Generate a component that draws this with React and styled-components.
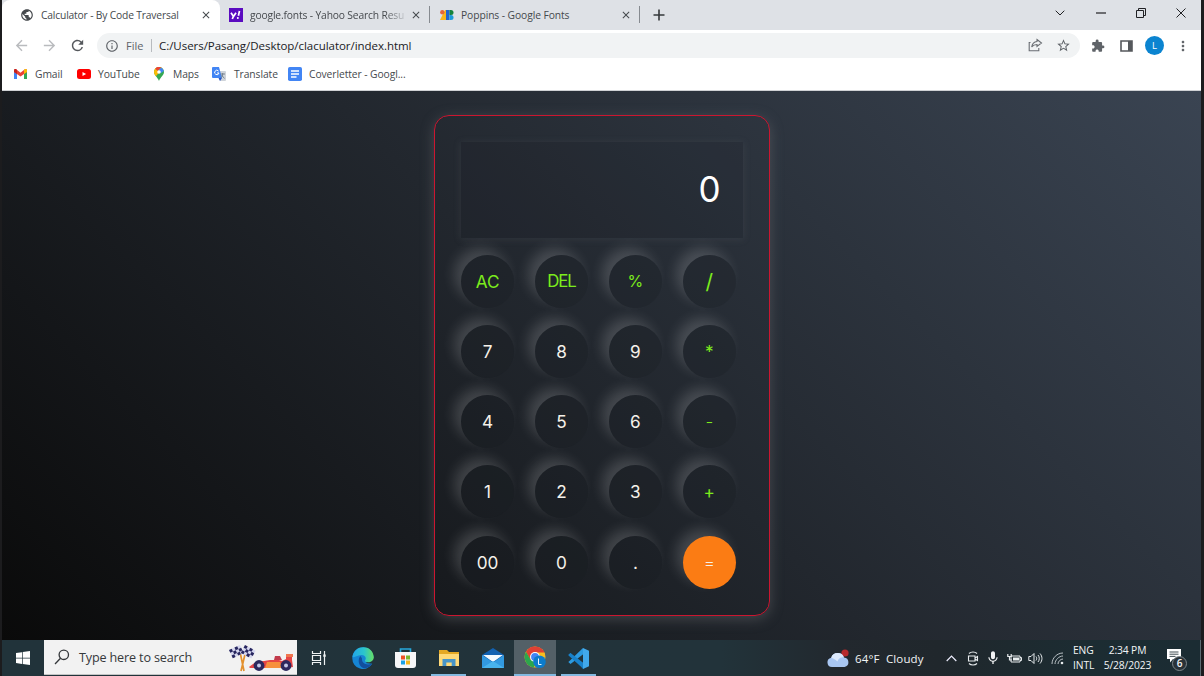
import React from "react";
import styled, { createGlobalStyle } from "styled-components";
import {
  MdArrowBack, MdArrowForward, MdRefresh, MdPublic, MdInfoOutline,
  MdStarBorder, MdExtension, MdMoreVert, MdClose, MdMic,
} from "react-icons/md";

const Global = createGlobalStyle`
  * { box-sizing: border-box; }
  body { margin: 0; background: #1b1b1b; }
`;

const ui = `"Open Sans", "Noto Sans", sans-serif`;

const Screen = styled.div`
  width: 1204px;
  height: 676px;
  padding: 0 3px 0 2px;
  display: flex;
  flex-direction: column;
  background: #1c1c1e;
  font-family: ${ui};
  overflow: hidden;
`;

const TabStrip = styled.div`
  height: 30px;
  flex: none;
  display: flex;
  background: #dee1e6;
  color: #45494d;
`;

const Tab = styled.div`
  width: ${(p) => p.$w}px;
  height: 30px;
  flex: none;
  display: flex;
  align-items: center;
  padding-left: ${(p) => p.$pl}px;
  background: ${(p) => (p.$active ? "#fff" : "transparent")};
  border-radius: 8px 8px 0 0;
  svg { flex: none; }
`;

const TabTitle = styled.span`
  width: ${(p) => p.$w}px;
  margin-left: 7px;
  flex: none;
  font-size: 10.3px;
  letter-spacing: ${(p) => p.$ls || 0}px;
  white-space: nowrap;
  ${(p) => p.$fade && "mask-image: linear-gradient(90deg, #000 84%, rgba(0, 0, 0, 0.2) 96%);"}
`;

const Divider = styled.span`
  width: 1px;
  height: ${(p) => p.$h}px;
  margin: ${(p) => p.$m || "0"};
  flex: none;
  background: ${(p) => p.$c || "#868a90"};
`;

const WindowButtons = styled.div`
  margin-left: auto;
  height: 25px;
  display: flex;
  align-items: center;
  color: #202124;
`;

const WindowButton = styled.span`
  width: 40.2px;
  display: flex;
  justify-content: center;
`;

const Toolbar = styled.div`
  height: 31px;
  flex: none;
  display: flex;
  align-items: center;
  background: #fff;
  color: #5f6368;
  padding-left: 11px;
`;

const NavButton = styled.span`
  width: 28px;
  display: flex;
  color: ${(p) => (p.$off ? "#b9bbbe" : "#55585c")};
`;

const Address = styled.div`
  width: 983px;
  height: 25px;
  border-radius: 13px;
  background: #f1f3f4;
  display: flex;
  align-items: center;
  padding: 0 9px 0 8px;
  flex: none;
`;

const FileLabel = styled.span`
  font-size: 11px;
  margin-left: 7px;
  width: 18px;
  white-space: nowrap;
`;

const Url = styled.span`
  font-size: 11.5px;
  letter-spacing: -0.04px;
  color: #202124;
  white-space: nowrap;
`;

const AddressActions = styled.span`
  margin-left: auto;
  display: flex;
  gap: 13px;
`;

const ToolbarActions = styled.span`
  margin-left: auto;
  padding-right: 10px;
  display: flex;
  align-items: center;
`;

const Avatar = styled.span`
  width: 19px;
  height: 19px;
  margin: 0 11px 0 12px;
  border-radius: 50%;
  background: #0b84d0;
  color: #fff;
  font-size: 9.5px;
  line-height: 19px;
  text-align: center;
`;

const Bookmarks = styled.div`
  height: 30px;
  flex: none;
  display: flex;
  padding: 0 0 4px 12px;
  align-items: center;
  background: #fff;
  border-bottom: 1px solid #cfd1d4;
  color: #45494d;
`;

const Bookmark = styled.span`
  width: ${(p) => p.$w}px;
  display: flex;
  align-items: center;
  gap: ${(p) => p.$gap}px;
  flex: none;
  font-size: 10.3px;
  letter-spacing: -0.08px;
  white-space: nowrap;
  svg { flex: none; }
`;

const Page = styled.main`
  height: 549px;
  flex: none;
  padding-top: 24px;
  display: flex;
  justify-content: center;
  align-items: flex-start;
  background: linear-gradient(45deg, #0a0a0a, #3a4452);
  overflow: hidden;
`;

const Calculator = styled.div`
  width: 336px;
  height: 501px;
  padding: 26px;
  border: 1px solid #cc1630;
  border-radius: 15px;
  box-shadow: 0 3px 14px rgba(113, 115, 119, 0.45);
  font-family: Inter, sans-serif;
`;

const Display = styled.div`
  width: 282px;
  height: 96px;
  padding: 0 22px 2px 0;
  display: flex;
  align-items: center;
  justify-content: flex-end;
  background: rgba(20, 24, 30, 0.1);
  box-shadow: 0 1px 7px 1px rgba(110, 116, 124, 0.16);
  color: #fff;
  font-size: 35px;
  line-height: 1;
`;

const Keys = styled.div`
  margin: 16.6px 0 0 0.6px;
  display: grid;
  grid-template-columns: repeat(4, 53px);
  column-gap: 20.9px;
  row-gap: 17.3px;
`;

const Key = styled.button`
  width: 53px;
  height: 53px;
  padding: 0;
  border: 0;
  border-radius: 50%;
  font: ${(p) => p.$weight || 400} ${(p) => p.$size || 17.2}px Inter, sans-serif;
  letter-spacing: ${(p) => p.$ls || 0}px;
  background: ${(p) => (p.$kind === "equal" ? "#fb7c14" : "rgba(24, 28, 34, 0.22)")};
  color: ${(p) => (p.$kind === "op" ? "#7cec1c" : "#f5f1ea")};
  box-shadow: -7px -7px 13px rgba(255, 255, 255, 0.16);
`;

const Taskbar = styled.footer`
  height: 36px;
  flex: none;
  display: flex;
  background: linear-gradient(90deg, #21333a, #22333a 60%, #22282e 70%, #20272c 78%, #1c2c32 90%, #1b2c33);
  color: #f2f4f5;
`;

const Start = styled.span`
  width: 42px;
  display: flex;
  align-items: center;
  justify-content: center;
`;

const Search = styled.div`
  width: 253px;
  height: 35px;
  display: flex;
  align-items: center;
  padding-left: 10px;
  background: #f2f2f2;
  color: #35383b;
  border-bottom: 1px solid #c4c4c4;
`;

const SearchText = styled.span`
  width: 150px;
  margin-left: 9px;
  font-size: 12.6px;
  letter-spacing: -0.15px;
  white-space: nowrap;
`;

const TaskButton = styled.span`
  width: ${(p) => p.$w || 43}px;
  height: 36px;
  display: flex;
  align-items: center;
  justify-content: center;
`;

const RunningApp = styled(TaskButton)`
  background: linear-gradient(#83b9e0, #83b9e0) center bottom / ${(p) => (p.$active ? 42 : 35)}px 2px no-repeat
    ${(p) => (p.$active ? ", #536067" : "")};
`;

const Tray = styled.div`
  margin-left: auto;
  display: flex;
  align-items: center;
  font-size: 11.5px;
  white-space: nowrap;
  svg { flex: none; }
`;

const Weather = styled.span`
  display: flex;
  align-items: center;
  gap: 6px;
  width: 118px;
`;

const Condition = styled.span`
  letter-spacing: 0.15px;
`;

const TrayIcon = styled.span`
  width: ${(p) => p.$w}px;
  display: flex;
  justify-content: center;
`;

const Stack = styled.span`
  width: ${(p) => p.$w}px;
  display: flex;
  flex-direction: column;
  align-items: ${(p) => (p.$center ? "center" : "flex-start")};
  font-size: 10.3px;
  letter-spacing: -0.12px;
  line-height: 15px;
`;

const Notice = styled.span`
  position: relative;
  width: 24px;
  height: 24px;
  margin: 4px 10px 0 10px;
`;

const Count = styled.span`
  position: absolute;
  left: 6px;
  top: 8px;
  width: 15px;
  height: 15px;
  border: 1px solid #7d868b;
  border-radius: 50%;
  background: #293238;
  font-size: 10px;
  font-weight: 600;
  line-height: 13px;
  text-align: center;
`;

const YahooIcon = () => (
  <svg width="14" height="14" viewBox="0 0 14 14">
    <rect width="14" height="14" fill="#5a0bc0" />
    <path d="M2 4.800 4.500 8.500 7 4.800M4.500 8.200 3.300 11M10.500 3 9.400 7.800" stroke="#fff" strokeWidth="1.700" fill="none" />
    <circle cx="8.800" cy="9.900" r="1" fill="#fff" />
  </svg>
);

const FontsIcon = () => (
  <svg width="14" height="12" viewBox="0 0 14 12">
    <path d="M5 1h2.500v10H0z" fill="#f9b51d" />
    <circle cx="2.300" cy="3.300" r="2.200" fill="#e5663b" />
    <path d="M6 1h3.500v10H6z" fill="#2265d0" />
    <path d="M9.500 1h1.500a2.500 2.500 0 0 1 0 5H9.500z" fill="#15833c" />
    <path d="M9.500 6h1.500a2.500 2.500 0 0 1 0 5H9.500z" fill="#1d9bd8" />
  </svg>
);

const GmailIcon = () => (
  <svg width="13" height="10" viewBox="0 0 13 10">
    <path d="M0 1.500V10h3V4z" fill="#4285f4" />
    <path d="M10 4v6h3V1.500z" fill="#34a853" />
    <path d="M0 1.500C0 0 1.500-.4 2.500.5l4 3.200 4-3.200C11.500-.4 13 0 13 1.500v1.400L6.500 7.600 0 2.900z" fill="#ea4335" />
    <path d="M10 1l.5-.5C11.500-.4 13 0 13 1.500v1.400L10 5z" fill="#fbbc04" />
    <path d="M0 1.500C0 0 1.500-.4 2.500.5L3 1v4L0 2.900z" fill="#c5221f" />
  </svg>
);

const YouTubeIcon = () => (
  <svg width="14" height="10" viewBox="0 0 14 10">
    <rect width="14" height="10" rx="2.500" fill="#f00" />
    <path d="M5.500 3v4l3.600-2z" fill="#fff" />
  </svg>
);

const MapsIcon = () => (
  <svg width="10" height="14" viewBox="0 0 10 14">
    <path d="M5 0a5 5 0 0 1 5 5c0 3.500-3.600 5-5 9C3.600 10 0 8.500 0 5a5 5 0 0 1 5-5z" fill="#34a853" />
    <path d="M0 5c0 1.800.8 3 1.900 4.300L8.500 1.500A5 5 0 0 0 0 5z" fill="#fbbc04" />
    <path d="M1.200 1.700 3.700 4 7.200.5A5 5 0 0 0 1.200 1.700z" fill="#ea4335" />
    <path d="M7 .4 4 4l3 2 2.800-2A5 5 0 0 0 7 .4z" fill="#4285f4" />
    <circle cx="5" cy="5" r="1.800" fill="#fff" />
  </svg>
);

const TranslateIcon = () => (
  <svg width="14" height="14" viewBox="0 0 14 14">
    <path d="M5 4h8a1 1 0 0 1 1 1v8a1 1 0 0 1-1 1H8z" fill="#cfd4da" />
    <path d="M1 0h6l3 11H1a1 1 0 0 1-1-1V1a1 1 0 0 1 1-1z" fill="#4285f4" />
    <path d="M6.500 4A2.200 2.200 0 1 0 7 6H5" stroke="#fff" fill="none" />
    <path d="M8.500 7H13M10.700 6v1c0 2-1 3-2 4M9.500 8l3 3.500" stroke="#65727f" strokeWidth=".8" fill="none" />
    <path d="m6.500 11 1.500 3 2-3z" fill="#2a56c6" />
  </svg>
);

const DocsIcon = () => (
  <svg width="14" height="14" viewBox="0 0 14 14">
    <rect width="14" height="14" rx="1.800" fill="#4285f4" />
    <path d="M3 4h8M3 7h8M3 10h5.500" stroke="#fff" strokeWidth="1.400" />
  </svg>
);

const ShareIcon = () => (
  <svg width="15" height="14" viewBox="0 0 15 14" fill="none" stroke="#6a6e73" strokeWidth="1.100">
    <path d="M2.500 4.500H1.200v8.300h9.600V10" />
    <path d="M9 1.500 13.500 5 9 8.500V6.500c-2.500 0-4 .8-5.300 2.500C4.200 5.800 6 3.800 9 3.500z" />
  </svg>
);

const PanelIcon = () => (
  <svg width="13" height="12" viewBox="0 0 13 12">
    <path d="M1 1h11v10H1z" fill="none" stroke="#55585c" strokeWidth="1.600" />
    <path d="M8 1h4v10H8z" fill="#55585c" />
  </svg>
);

const PanelButton = styled.span`
  display: flex;
  margin-left: 15px;
`;

const WindowsIcon = () => (
  <svg width="14" height="14" viewBox="0 0 14 14" fill="#fff">
    <path d="M0 2 6 1.200v5.500H0zM6.700 1.100 14 0v6.700H6.700zM0 7.400h6v5.500L0 12zM6.700 7.400H14V14l-7.300-1z" />
  </svg>
);

const SearchIcon = () => (
  <svg width="16" height="16" viewBox="0 0 16 16" fill="none" stroke="#34373a" strokeWidth="1.300">
    <circle cx="9.800" cy="5.800" r="4.700" />
    <path d="M6.500 9.300 1 15" />
  </svg>
);

const flagSquares = [];
for (let r = 0; r < 3; r++) for (let c = 0; c < 4; c++) if ((r + c) % 2 === 0) flagSquares.push([c * 3, r * 3]);

const RaceIcon = () => (
  <svg width="66" height="30" viewBox="0 0 66 30">
    <path d="M10 5 15 29M18 4 12 29" stroke="#e3912e" strokeWidth="1.700" />
    <g transform="translate(0 8) rotate(-25)">
      <rect width="12" height="9" fill="#d6d7ee" />
      {flagSquares.map(([x, y]) => <rect key={`${x}-${y}`} x={x} y={y} width="3" height="3" fill="#27265f" />)}
    </g>
    <g transform="translate(16 3) rotate(28)">
      <rect width="12" height="9" fill="#d6d7ee" />
      {flagSquares.map(([x, y]) => <rect key={`${x}-${y}`} x={x} y={y} width="3" height="3" fill="#27265f" />)}
    </g>
    <path d="M20 25c4-4 9-6 15-6l6-1h9l3 1 4-2v-4h6v5l1 7-6 1H21z" fill="#e64545" />
    <path d="M38 20h13l2 6H36z" fill="#f7903d" />
    <path d="M46 14h5l2 4h-8z" fill="#c23b4c" />
    <path d="M57 12h7v3h-7z" fill="#f0764e" />
    <circle cx="30" cy="23.500" r="5.400" fill="#2d285e" />
    <circle cx="30" cy="23.500" r="2" fill="#c4c8e8" />
    <circle cx="57" cy="23.500" r="5.400" fill="#2d285e" />
    <circle cx="57" cy="23.500" r="2" fill="#c4c8e8" />
  </svg>
);

const TaskViewIcon = () => (
  <svg width="16" height="14" viewBox="0 0 16 14" fill="none" stroke="#eef2f3" strokeWidth="1.200">
    <path d="M1.500 0v2.500h8V0M1.500 14v-2.500h8V14M1.500 4.500h8v5h-8zM13.500 0v14" />
    <path d="M12.300 3.500h2.400v2.300h-2.400z" fill="#eef2f3" stroke="none" />
  </svg>
);

const EdgeIcon = () => (
  <svg width="22" height="22" viewBox="0 0 22 22">
    <defs>
      <linearGradient id="edgeTop" x1="0" x2="1"><stop stopColor="#22a5e8" /><stop offset=".55" stopColor="#2bc5cc" /><stop offset="1" stopColor="#68df62" /></linearGradient>
    </defs>
    <path d="M.3 11a10.700 10.700 0 0 1 21.400 0l-8 5 6.500.8A10.700 10.700 0 0 1 .3 11z" fill="#1685d3" />
    <path d="M.5 10C2-3 21-3 21.700 10c.2 4-3 5.500-6 5.300-2 0-3.300-.8-2.500-2.300 1.800-3-1-5.300-4-5C5 8.200 1.500 11 .5 10z" fill="url(#edgeTop)" />
    <path d="M8.500 9C6 11 5.500 18 11 21c4 1 7.500-1.500 9-4.500-5 2.500-10.500 0-10-5z" fill="#124f9e" />
  </svg>
);

const StoreIcon = () => (
  <svg width="21" height="22" viewBox="0 0 21 22">
    <path d="M5.500 6V2h10v4" fill="none" stroke="#27a9dc" strokeWidth="1.600" />
    <path d="M0 5h21v13a3 3 0 0 1-3 3H3a3 3 0 0 1-3-3z" fill="#f6f6f7" />
    <path d="M6 8.500h4v4H6z" fill="#ef5124" /><path d="M11 8.500h4v4h-4z" fill="#7db82d" />
    <path d="M6 13.500h4v4H6z" fill="#1ba0e4" /><path d="M11 13.500h4v4h-4z" fill="#f4b51b" />
  </svg>
);

const FolderIcon = () => (
  <svg width="20" height="18" viewBox="0 0 20 18">
    <path d="M0 1h8l2 2h10v14H0z" fill="#e5a824" />
    <path d="M0 5h20v12H0z" fill="#ffd978" />
    <path d="M3.500 17v-7h13v7h-3.800v-3.500H7.300V17z" fill="#4794c7" />
  </svg>
);

const MailIcon = () => (
  <svg width="22" height="21" viewBox="0 0 22 21">
    <path d="M0 7 11 0l11 7v13H0z" fill="#1261b1" />
    <path d="M1 7h20L11 14z" fill="#f3f9fe" />
    <path d="M0 7l11 7.500L22 7v13H0z" fill="#3299e0" />
    <path d="M0 20 11 13l11 7z" fill="#48b3ed" />
  </svg>
);

const ChromeIcon = () => (
  <svg width="22" height="24" viewBox="0 0 22 24">
    <circle cx="11" cy="11" r="10.500" fill="#f8bd20" />
    <path d="M2 5.700A10.500 10.500 0 0 1 20.600 6.500H11L6.500 14z" fill="#df4034" />
    <path d="M2 5.700A10.500 10.500 0 0 0 9.500 21.400L14 14H6.800z" fill="#2ca64d" />
    <circle cx="11" cy="11" r="5" fill="#fff" />
    <circle cx="11" cy="11" r="3.900" fill="#4285f4" />
    <circle cx="15.500" cy="15.800" r="6.300" fill="#0d7ccb" />
    <path d="M14.500 12.500v6h3" stroke="#e8f6ff" fill="none" />
  </svg>
);

const CodeIcon = () => (
  <svg width="21" height="21" viewBox="0 0 21 21">
    <path d="M15 0 2 12.500.3 14l2.200 2L15.500 6z" fill="#2d9be0" />
    <path d="M15 21 2.500 5 .3 7l1.700 1.800L15 20z" fill="#1372b8" />
    <path d="M.3 7l2.200-2L15.500 15v6z" fill="#1882cb" />
    <path d="M15 0l6 2.700v15.600L15 21z" fill="#41a9eb" />
  </svg>
);

const CloudIcon = () => (
  <svg width="22" height="19" viewBox="0 0 22 19">
    <circle cx="18" cy="4" r="3.600" fill="#b72a2c" />
    <path d="M5 18a4.700 4.700 0 0 1-.8-9.300A6.800 6.800 0 0 1 17 8.500a4.800 4.800 0 0 1 .5 9.500z" fill="#a9c7f2" />
    <path d="M4.200 8.700A6.800 6.800 0 0 1 17 8.500c-4-1-6 2-6.500 4C8 10 6 9.500 4.200 8.700z" fill="#dce9fc" />
  </svg>
);

const MeetIcon = () => (
  <svg width="12" height="15" viewBox="0 0 12 15" fill="none" stroke="#e8ecee" strokeWidth="1.100">
    <path d="M2 2.500c2-2 6-2 8 0M2 12.500c2 2 6 2 8 0M1.500 5h6.500v5H1.500zM8 7l2.500-1.500v4L8 8" />
  </svg>
);

const BatteryIcon = () => (
  <svg width="15" height="11" viewBox="0 0 15 11">
    <path d="M4 3h9v6H4zM13 4.500h1.500v3H13" fill="none" stroke="#e8ecee" />
    <path d="M6 4.500h6v3H6z" fill="#e8ecee" />
    <path d="M.8 1v2.500h3.400V1M2.500 3.500V7H5" stroke="#e8ecee" strokeWidth="1.200" fill="none" />
  </svg>
);

const VolumeIcon = () => (
  <svg width="16" height="13" viewBox="0 0 16 13" fill="none" stroke="#e8ecee">
    <path d="M.8 4.500H3l3-3v10l-3-3H.8zM8 4.500c.9 1.200.9 2.800 0 4M10 3c1.700 2 1.700 5 0 7M12 1.500c2.600 3 2.600 7 0 10" />
  </svg>
);

const WifiIcon = () => (
  <svg width="13" height="13" viewBox="0 0 13 13" fill="none" stroke="#b9c1c5">
    <path d="M1 12C1 6 6 1 12 1M4 12c0-4 4-8 8-8M7 12c0-2.500 2.500-5 5-5" />
    <circle cx="11" cy="11" r="1.300" fill="#e8ecee" stroke="none" />
  </svg>
);

const ChatIcon = () => (
  <svg width="16" height="16" viewBox="0 0 16 16">
    <path d="M1 1h14v10H7l-3 3.500V11H1z" fill="#fff" />
    <path d="M3.500 4h9M3.500 6.200h9M3.500 8.400h6" stroke="#2a383e" strokeWidth=".9" />
  </svg>
);

const keys = [
  { label: "AC", kind: "op" }, { label: "DEL", kind: "op", size: 16.8, ls: -1 }, { label: "%", kind: "op", size: 16 }, { label: "/", kind: "op", size: 21 },
  { label: "7" }, { label: "8" }, { label: "9" }, { label: "*", kind: "op" },
  { label: "4" }, { label: "5" }, { label: "6" }, { label: "-", kind: "op", weight: 300 },
  { label: "1" }, { label: "2" }, { label: "3" }, { label: "+", kind: "op" },
  { label: "00" }, { label: "0" }, { label: "." }, { label: "=", kind: "equal", weight: 300 },
];

export default function App() {
  return (
    <Screen>
      <Global />
      <TabStrip>
        <Tab $w={218} $pl={18} $active>
          <MdPublic size={14} />
          <TabTitle $w={159} $ls={-0.18}>Calculator - By Code Traversal</TabTitle>
          <MdClose size={12} />
        </Tab>
        <Tab $w={209} $pl={9}>
          <YahooIcon />
          <TabTitle $w={160} $ls={-0.16} $fade>google.fonts - Yahoo Search Resu</TabTitle>
          <MdClose size={12} />
        </Tab>
        <Divider $h={17} $m="6px 0 0" />
        <Tab $w={209} $pl={10}>
          <FontsIcon />
          <TabTitle $w={159} $ls={-0.09}>Poppins - Google Fonts</TabTitle>
          <MdClose size={12} />
        </Tab>
        <Divider $h={17} $m="6px 13px 0 0" />
        <svg width="12" height="30" viewBox="0 0 12 30"><path d="M6 9.500v11M.5 15h11" stroke="#35383b" strokeWidth="1.600" /></svg>
        <WindowButtons>
          <WindowButton><svg width="10" height="6" viewBox="0 0 10 6"><path d="m.7.7 4.300 4.300L9.300.7" fill="none" stroke="currentColor" /></svg></WindowButton>
          <WindowButton><svg width="10" height="2" viewBox="0 0 10 2"><path d="M0 1h10" stroke="currentColor" strokeWidth="1.200" /></svg></WindowButton>
          <WindowButton><svg width="10" height="10" viewBox="0 0 10 10"><path d="M.5 2.500h7v7h-7zM2.500 2.500v-2h7v7h-2" fill="none" stroke="currentColor" /></svg></WindowButton>
          <WindowButton><svg width="10" height="10" viewBox="0 0 10 10"><path d="m.5.5 9 9m0-9-9 9" fill="none" stroke="currentColor" /></svg></WindowButton>
        </WindowButtons>
      </TabStrip>
      <Toolbar>
        <NavButton $off><MdArrowBack size={17} /></NavButton>
        <NavButton $off><MdArrowForward size={17} /></NavButton>
        <NavButton><MdRefresh size={17} /></NavButton>
        <Address>
          <MdInfoOutline size={14} />
          <FileLabel>File</FileLabel>
          <Divider $h={13} $m="0 7px 0 7px" $c="#b8bbbf" />
          <Url>C:/Users/Pasang/Desktop/claculator/index.html</Url>
          <AddressActions><ShareIcon /><MdStarBorder size={15} /></AddressActions>
        </Address>
        <ToolbarActions>
          <MdExtension size={14} />
          <PanelButton><PanelIcon /></PanelButton>
          <Avatar>L</Avatar>
          <MdMoreVert size={16} />
        </ToolbarActions>
      </Toolbar>
      <Bookmarks>
        <Bookmark $w={63} $gap={8}><GmailIcon />Gmail</Bookmark>
        <Bookmark $w={77} $gap={7}><YouTubeIcon />YouTube</Bookmark>
        <Bookmark $w={58} $gap={9}><MapsIcon />Maps</Bookmark>
        <Bookmark $w={76} $gap={8}><TranslateIcon />Translate</Bookmark>
        <Bookmark $w={130} $gap={7}><DocsIcon />Coverletter - Googl...</Bookmark>
      </Bookmarks>
      <Page>
        <Calculator>
          <Display>0</Display>
          <Keys>
            {keys.map((k, i) => (
              <Key key={i} $kind={k.kind} $size={k.size} $ls={k.ls} $weight={k.weight}>{k.label}</Key>
            ))}
          </Keys>
        </Calculator>
      </Page>
      <Taskbar>
        <Start><WindowsIcon /></Start>
        <Search>
          <SearchIcon />
          <SearchText>Type here to search</SearchText>
          <RaceIcon />
        </Search>
        <TaskButton $w={43}><TaskViewIcon /></TaskButton>
        <TaskButton $w={45}><EdgeIcon /></TaskButton>
        <TaskButton $w={41}><StoreIcon /></TaskButton>
        <RunningApp $w={45}><FolderIcon /></RunningApp>
        <TaskButton $w={43}><MailIcon /></TaskButton>
        <RunningApp $w={42} $active><ChromeIcon /></RunningApp>
        <RunningApp $w={44}><CodeIcon /></RunningApp>
        <Tray>
          <Weather><CloudIcon /><Condition>64°F&nbsp; Cloudy</Condition></Weather>
          <TrayIcon $w={12}><svg width="11" height="7" viewBox="0 0 11 7"><path d="m.7 6 4.800-4.800L10.300 6" fill="none" stroke="#eef" strokeWidth="1.200" /></svg></TrayIcon>
          <TrayIcon $w={31}><MeetIcon /></TrayIcon>
          <TrayIcon $w={10}><MdMic size={16} /></TrayIcon>
          <TrayIcon $w={33}><BatteryIcon /></TrayIcon>
          <TrayIcon $w={10}><VolumeIcon /></TrayIcon>
          <TrayIcon $w={32}><WifiIcon /></TrayIcon>
          <Stack $w={26}><span>ENG</span><span>INTL</span></Stack>
          <Stack $w={57} $center><span>2:34 PM</span><span>5/28/2023</span></Stack>
          <Notice><ChatIcon /><Count>6</Count></Notice>
          <Divider $h={36} $c="#5c6c73" />
        </Tray>
      </Taskbar>
    </Screen>
  );
}
